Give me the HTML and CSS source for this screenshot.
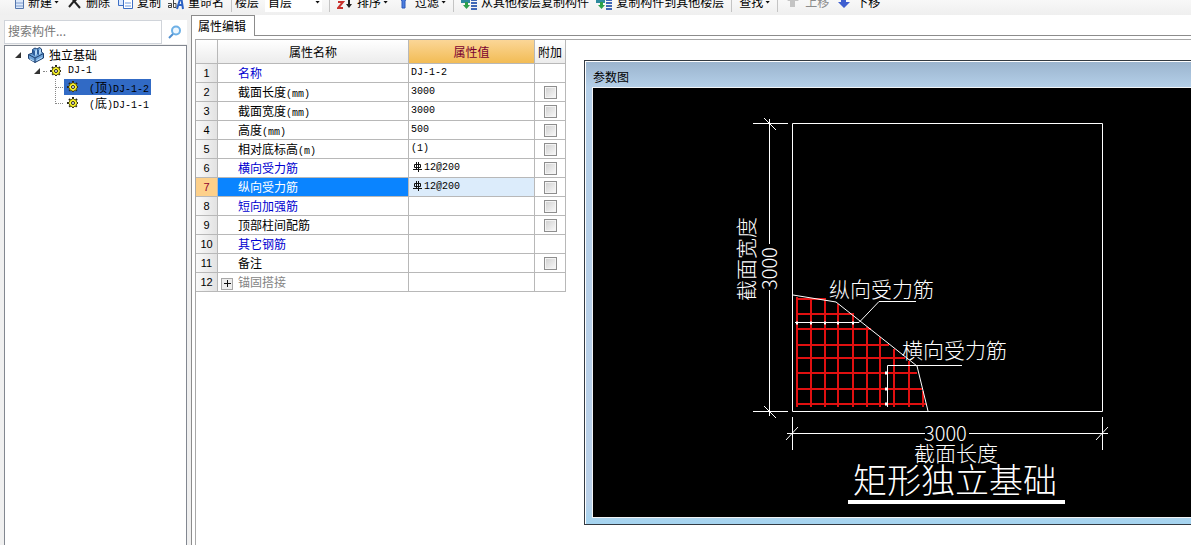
FILE: index.html
```html
<!DOCTYPE html>
<html lang="zh-CN">
<head>
<meta charset="utf-8">
<title>属性编辑</title>
<link rel="stylesheet" href="styles.css">
</head>
<body>
<svg class="defs" aria-hidden="true">
  <symbol id="gear" viewBox="0 0 12 12">
    <path d="M6 0v12M0 6h12M2 2l8 8M10 2l-8 8" stroke="#222" stroke-width="2" stroke-dasharray="2 1"/>
    <circle cx="6" cy="6" r="4" fill="#f5ee1c" stroke="#6b6712"/>
    <path d="M6 2v8M2 6h8" stroke="#fff94a" stroke-width="1"/>
    <circle cx="6" cy="6" r="1.500" fill="#fff" stroke="#222"/>
  </symbol>
  <symbol id="rebar" viewBox="0 0 9 10">
    <path d="M3.500 0v8M5.500 0v10M1.500 2.500h6v3h-6zM0 7.500h9" fill="none" stroke="#111"/>
  </symbol>
  <symbol id="transfer" viewBox="0 0 16 16">
    <path d="M0 4h9v5H0z" fill="#2d8a9e"/>
    <path d="M4 8h3v3h2l-3.500 4L2 11h2z" fill="#2ca04a"/>
    <path d="M10 3h6M10 6h6M10 9h6M10 12h6M10 15h6" stroke="#3f66b5" stroke-width="2"/>
  </symbol>
</svg>
<div class="app">
  <header class="toolbar">
    <button class="tool"><svg class="icon" viewBox="0 0 16 16"><path d="M7.500 1.500h8v13h-8z" fill="#dbe8fa" stroke="#5577ad"/><path d="M8 9h7M8 12h7" stroke="#7f9cce"/></svg><span>新建</span><i class="caret"></i></button>
    <button class="tool"><svg class="icon" viewBox="0 0 16 16"><path d="M3 13l5-6 6 7M4 2l5 6M13 2L8 8" fill="none" stroke="#222" stroke-width="2"/></svg><span>删除</span></button>
    <button class="tool"><svg class="icon" viewBox="0 0 16 16"><path d="M1.500 3.500h8v8h-8z" fill="#dbe9ff" stroke="#3d6fc4"/><path d="M6.500 5.500h9v9h-9z" fill="#fff" stroke="#3d6fc4"/><path d="M8 9h6M8 12h6" stroke="#6f9be0"/></svg><span>复制</span></button>
    <button class="tool"><svg class="icon" viewBox="0 0 16 16"><path d="M9 15l4-13 2 13M10 11h5" fill="none" stroke="#2c62c4" stroke-width="2"/><path d="M0 9.500h3.500v4H.5v-2h3M5.500 6v7.500h2.500v-4H5.500" fill="none" stroke="#444"/></svg><span>重命名</span></button>
    <span class="sep"></span>
    <label class="field">楼层<span class="drop"><select class="floor"><option>首层</option></select><i class="caret"></i></span></label>
    <span class="sep"></span>
    <button class="tool"><svg class="icon" viewBox="0 0 16 16"><path d="M1 8h5l-5 6h5" fill="none" stroke="#c8322d" stroke-width="2"/><path d="M12 2v10" stroke="#222" stroke-width="2"/><path d="M9 10h6l-3 4z" fill="#222"/></svg><span>排序</span><i class="caret"></i></button>
    <button class="tool"><svg class="icon" viewBox="0 0 16 16"><path d="M2 1h12L10 7v7H7V7z" fill="#4c7ee0" stroke="#2d58b8"/></svg><span>过滤</span><i class="caret"></i></button>
    <span class="sep"></span>
    <button class="tool"><svg class="icon"><use href="#transfer"/></svg><span>从其他楼层复制构件</span></button>
    <button class="tool"><svg class="icon"><use href="#transfer"/></svg><span>复制构件到其他楼层</span></button>
    <span class="sep"></span>
    <button class="tool"><span>查找</span><i class="caret"></i></button>
    <span class="sep"></span>
    <button class="tool" disabled><svg class="icon" viewBox="0 0 16 16"><path d="M8 2l6 5h-4v6H5V7H2z" fill="#c4c4c4"/></svg><span>上移</span></button>
    <button class="tool"><svg class="icon" viewBox="0 0 16 16"><path d="M5 2h5v6h4l-6 6-6-6h3z" fill="#3f5fd0"/></svg><span>下移</span></button>
  </header>
  <div class="main">
    <aside class="sidebar">
      <form class="search">
        <input class="search-box" type="text" placeholder="搜索构件..." aria-label="搜索构件">
        <button class="search-go" type="button" aria-label="搜索"><svg class="lens" viewBox="0 0 14 14"><circle cx="8" cy="5.500" r="4" fill="#eef7ff" stroke="#6db0e6" stroke-width="2"/><path d="M5 9l-4 4" stroke="#4f8fd0" stroke-width="2"/></svg></button>
      </form>
      <ul class="tree">
        <li class="node root"><svg class="twist" viewBox="0 0 6 6"><path d="M6 0v6H0z" fill="#333"/></svg><svg class="block" viewBox="0 0 16 16"><path d="M.5 7.500L4.500 6V2.500L7 1l2 1 2.500-1.500L13.500 2v3l2 1.500V11L7 15.500l-6.500-4z" fill="#6ea3d8" stroke="#1d3f6e"/><path d="M4.500 2.500L7 4v5L4.500 7.500zM9 2l2 1v5L9 7z" fill="#2f5f9c"/><path d="M7 4l2-2v5L7 9zM11 3l2-1v4l-2 2z" fill="#b4d8f6"/><path d="M.5 7.500L7 11l8.500-4.500M7 11v4.500" fill="none" stroke="#1d3f6e"/><path d="M2 12l4 2M8.500 13.500L14 10.500" stroke="#b9dcfa"/></svg><span>独立基础</span></li>
        <li class="node group"><svg class="twist" viewBox="0 0 6 6"><path d="M6 0v6H0z" fill="#333"/></svg><span class="stub"></span><svg class="gear"><use href="#gear"/></svg><span class="mono">DJ-1</span></li>
        <li class="node leaf"><svg class="branch" viewBox="0 0 9 16"><path d="M.5 0v16M1 8.500h8" stroke="#888" stroke-dasharray="1 1"/></svg><span class="pick selected"><svg class="gear"><use href="#gear"/></svg><span><span class="mono">(</span>顶<span class="mono">)DJ-1-2</span></span></span></li>
        <li class="node leaf"><svg class="branch" viewBox="0 0 9 16"><path d="M.5 0v9M1 8.500h8" stroke="#888" stroke-dasharray="1 1"/></svg><span class="pick"><svg class="gear"><use href="#gear"/></svg><span><span class="mono">(</span>底<span class="mono">)DJ-1-1</span></span></span></li>
      </ul>
    </aside>
    <section class="editor">
      <div class="tabs"><button class="tab">属性编辑</button></div>
      <div class="sheet">
        <table class="props">
          <colgroup><col class="c-num"><col class="c-name"><col class="c-value"><col class="c-extra"></colgroup>
          <thead><tr><th></th><th>属性名称</th><th class="active">属性值</th><th>附加</th></tr></thead>
          <tbody>
            <tr><th>1</th><td class="name key">名称</td><td class="mono">DJ-1-2</td><td></td></tr>
            <tr><th>2</th><td class="name">截面长度<span class="mono">(mm)</span></td><td class="mono">3000</td><td class="extra"><input type="checkbox" aria-label="附加 截面长度"></td></tr>
            <tr><th>3</th><td class="name">截面宽度<span class="mono">(mm)</span></td><td class="mono">3000</td><td class="extra"><input type="checkbox" aria-label="附加 截面宽度"></td></tr>
            <tr><th>4</th><td class="name">高度<span class="mono">(mm)</span></td><td class="mono">500</td><td class="extra"><input type="checkbox" aria-label="附加 高度"></td></tr>
            <tr><th>5</th><td class="name">相对底标高<span class="mono">(m)</span></td><td class="mono">(1)</td><td class="extra"><input type="checkbox" aria-label="附加 相对底标高"></td></tr>
            <tr><th>6</th><td class="name key">横向受力筋</td><td class="mono"><svg class="rebar"><use href="#rebar"/></svg>12@200</td><td class="extra"><input type="checkbox" aria-label="附加 横向受力筋"></td></tr>
            <tr class="current"><th>7</th><td class="name">纵向受力筋</td><td class="mono"><svg class="rebar"><use href="#rebar"/></svg>12@200</td><td class="extra"><input type="checkbox" aria-label="附加 纵向受力筋"></td></tr>
            <tr><th>8</th><td class="name key">短向加强筋</td><td></td><td class="extra"><input type="checkbox" aria-label="附加 短向加强筋"></td></tr>
            <tr><th>9</th><td class="name">顶部柱间配筋</td><td></td><td class="extra"><input type="checkbox" aria-label="附加 顶部柱间配筋"></td></tr>
            <tr><th>10</th><td class="name key">其它钢筋</td><td></td><td></td></tr>
            <tr><th>11</th><td class="name">备注</td><td></td><td class="extra"><input type="checkbox" aria-label="附加 备注"></td></tr>
            <tr><th>12</th><td class="name folded"><button class="expand" aria-label="展开"><svg class="plus" viewBox="0 0 9 9"><path d="M4.500 1v7M1 4.500h7" stroke="#111"/></svg></button>锚固搭接</td><td></td><td></td></tr>
          </tbody>
        </table>
      </div>
      <section class="window">
        <h2 class="caption">参数图</h2>
        <svg class="canvas" viewBox="593 88 598 429">
          <g class="red">
            <path d="M797 297V407M811 298V407M825 299V407M838 304V407M853 315V407M867 327V407M880 337V407M894 349V407M909 361V407M923 391V407"/>
            <path d="M796 299H826M796 314H854M796 329H871M796 345H889M796 358H905M796 373H917M796 389H922M796 404H926"/>
          </g>
          <g class="line">
            <path d="M792.500 123.500H1102.500V411.500H792.500z"/>
            <path d="M753 123.500H788M753 411.500H788M769.500 119V244M769.500 290V416M764 118l12 12M764 406l12 12"/>
            <path d="M792.500 417V450M1102.500 417V450M787 433.500H925M969 433.500H1108M786 440l12-13M1096 440l12-13"/>
            <path d="M793 295L836 302L917 366L928 411"/>
            <path d="M795 322.500H859L879 301.500H916M887.500 407V365.500H962"/>
          </g>
          <path class="dots" d="M796 323h2M810 323h2M824 323h2M837 323h2M852 323h2M885 373h2M885 389h2M885 404h2"/>
          <g class="cad">
            <text x="829" y="297">纵向受力筋</text>
            <text x="902" y="358">横向受力筋</text>
            <text x="914" y="461">截面长度</text>
            <text class="digits" x="924" y="441">3000</text>
            <text transform="translate(754 301) rotate(-90)">截面宽度</text>
            <text class="digits" transform="translate(777 290) rotate(-90)">3000</text>
            <text class="title" x="853" y="493">矩形独立基础</text>
          </g>
          <path class="rule" d="M848 502H1065"/>
        </svg>
      </section>
    </section>
  </div>
</div>
</body>
</html>
```

FILE: styles.css
```css
* { box-sizing: border-box; }
body {
  margin: 0;
  background: #fff;
  color: #000;
  font: 12px/16px "Noto Sans CJK SC", sans-serif;
}
button, input, select { font: inherit; color: inherit; }
button { border: 0; padding: 0; background: none; }
svg { display: block; flex: none; }
.defs { position: absolute; width: 0; height: 0; }
.mono { font-family: "Liberation Mono", "Noto Sans CJK SC", monospace; font-size: 10px; }
span.mono { line-height: 1; }

.app { display: flex; flex-direction: column; height: 100vh; overflow: hidden; }

/* Toolbar, scrolled partly out of view */
.toolbar {
  display: flex;
  align-items: flex-end;
  gap: 7px;
  height: 15px;
  flex: none;
  padding: 0 8px 3px;
  overflow: hidden;
  white-space: nowrap;
  background: linear-gradient(#f8f8f8, #efefef);
}
.tool { display: flex; align-items: center; height: 20px; flex: none; }
.tool:disabled { color: #8c8c8c; }
.icon { width: 16px; height: 16px; margin-right: 4px; }
.caret { width: 5px; height: 3px; margin-left: 2px; background: #111; clip-path: polygon(0 0, 100% 0, 50% 100%); }
.sep { width: 1px; height: 20px; flex: none; background: #c4c4c4; }
.field { display: flex; align-items: center; gap: 6px; height: 20px; margin-left: -4px; flex: none; }
.drop { display: flex; align-items: center; width: 57px; padding-right: 2px; background: #fff; }
.floor { appearance: none; flex: 1; min-width: 0; height: 20px; border: 0; padding: 0 0 0 3px; background: none; }

.main { display: flex; flex: 1; min-height: 0; }

/* Component tree */
.sidebar { display: flex; flex-direction: column; width: 191px; flex: none; padding: 5px 4px 0; background: #f0f0f0; }
.search { display: flex; height: 25px; flex: none; }
.search-box { flex: 1; min-width: 0; height: 24px; padding: 0 3px 4px; border: 1px solid #d0d4da; background: #fff; }
.search-box::placeholder { color: #777; opacity: 1; }
.search-go { display: grid; place-items: center; width: 25px; height: 24px; background: #fff; }
.lens { width: 14px; height: 14px; }
.tree { flex: 1; margin: 0; padding: 1px 0 0; list-style: none; border: 1px solid #828790; border-bottom: 0; background: #fff; white-space: nowrap; }
.node { display: flex; align-items: center; height: 16px; }
.root { padding-left: 10px; }
.group { padding-left: 29px; }
.leaf { padding-left: 50px; }
.twist { width: 6px; height: 6px; }
.block { width: 16px; height: 16px; margin: 0 5px 0 7px; }
.stub { width: 4px; margin: 0 3px; border-top: 1px dotted #888; }
.gear { width: 12px; height: 12px; }
.group .gear { margin-right: 6px; }
.branch { width: 9px; height: 16px; }
.pick { display: flex; align-items: center; gap: 10px; height: 16px; padding: 0 2px 0 3px; }
.selected { background: #316ac5; }

/* Property editor */
.editor { position: relative; display: flex; flex-direction: column; flex: 1; min-width: 0; border-left: 1px solid #8c8c8c; }
.tabs { display: flex; flex: none; height: 21px; border-bottom: 1px solid #8c8c8c; }
.tab { height: 21px; padding: 0 8px 0 6px; border: solid #8c8c8c; border-width: 1px 1px 0 0; background: #fff; }
.sheet { flex: 1; margin: 3px 0 0 3px; border: solid #a8a8a8; border-width: 1px 0 0 1px; }
.props { width: 370px; table-layout: fixed; border-collapse: separate; border-spacing: 0; }
.c-num { width: 22px; }
.c-name { width: 191px; }
.c-value { width: 126px; }
.c-extra { width: 31px; }
.props th, .props td { height: 19px; padding: 0 0 0 2px; border: solid #b8b8b8; border-width: 0 1px 1px 0; text-align: left; font-weight: normal; line-height: 16px; white-space: nowrap; }
.props thead th { height: 24px; padding: 0; text-align: center; background: linear-gradient(#fff, #ececec); }
.props thead .active { color: #7a0030; background: linear-gradient(#fbd697, #f2bc55); }
.props tbody th { padding: 0; text-align: center; font-family: "Liberation Sans", sans-serif; font-size: 11px; background: linear-gradient(90deg, #fafafa, #e2e2e2); }
.props .name { padding-left: 20px; }
.props .key { color: #0000d0; }
.props .folded { padding-left: 3px; color: #858585; }
.props .extra { padding: 0 0 0 1px; text-align: center; }
.props .current th { color: #900030; background: #fdd08a; }
.props .current .name { color: #fff; background: #0a84ff; }
.props .current .mono { background: #dcecfb; }
.extra input { display: block; appearance: none; width: 13px; height: 13px; margin: 0 auto; border: 1px solid #8e8e8e; background: linear-gradient(135deg, #cfcfcf, #fafafa); box-shadow: inset 0 0 0 1px #f4f4f4; }
.rebar { display: inline-block; width: 9px; height: 10px; margin: 0 2px; vertical-align: middle; }
.expand { display: inline-grid; place-items: center; width: 12px; height: 12px; margin-right: 5px; border: 1px solid #a8a8a8; background: #eee; vertical-align: middle; }
.plus { width: 9px; height: 9px; }

/* Floating parameter diagram */
.window {
  position: absolute;
  top: 45px;
  left: 392px;
  right: 0;
  padding: 0 0 7px 8px;
  border: solid #333a42;
  border-width: 1px 0 1px 1px;
  background: linear-gradient(#9ab3cd, #b4cfe8 26px, #bad0e8 440px, #a4d4f0);
  box-shadow: inset 1px 1px #fff;
}
.caption { margin: 0; padding: 8px 0 3px; font-size: 12px; font-weight: normal; line-height: 16px; }
.canvas { width: 100%; height: auto; background: #000; outline: 1px solid #f2f4f6; }
.red { fill: none; stroke: #e01010; stroke-width: 2; }
.line { fill: none; stroke: #fff; }
.dots { fill: none; stroke: #fff; stroke-width: 3; }
.cad { fill: #fff; font-size: 21px; font-weight: 300; }
.digits { font-size: 20px; }
.title { font-size: 34px; }
.rule { stroke: #fff; stroke-width: 4; }
```
